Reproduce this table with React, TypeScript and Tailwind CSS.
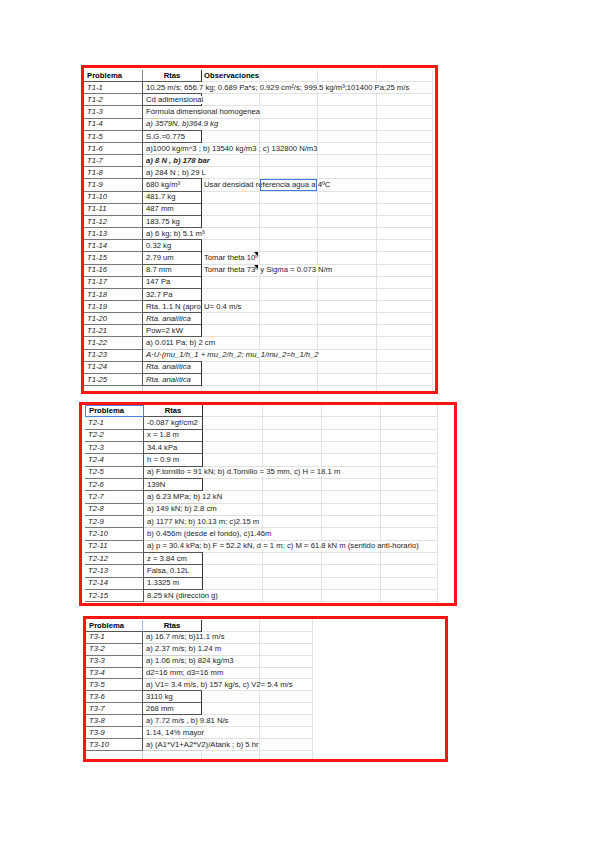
import React from 'react';

type Row = {
  p: string;
  r: string;
  o?: string;
  it?: boolean; // italic answer
  strong?: boolean;
  box?: boolean; // answer cell framed with dark border
  clip?: boolean; // answer cut at the column edge
  sel?: boolean; // blue selection on column D
  note?: boolean; // comment marker on column C
  empty?: boolean;
};

type SheetProps = {
  rows: Row[];
  widths: string[];
  rowH: string;
  head: 'plain' | 'full' | 'edge';
  obsTitle?: boolean;
  frame: string;
  inner: string;
};

const t1: Row[] = [
  { p: 'T1-1', r: '10.25 m/s; 656.7 kg; 0.689 Pa*s; 0.929 cm²/s; 999.5 kg/m³;101400 Pa;25 m/s' },
  { p: 'T1-2', r: 'Cd adimensional', box: true },
  { p: 'T1-3', r: 'Fórmula dimensional homogenea' },
  { p: 'T1-4', r: 'a) 3579N, b)364.9 kg', it: true },
  { p: 'T1-5', r: 'S.G.=0.775', box: true },
  { p: 'T1-6', r: 'a)1000 kg/m^3 ; b) 13540 kg/m3 ; c) 132800 N/m3' },
  { p: 'T1-7', r: 'a) 8 N , b) 178 bar', it: true, strong: true },
  { p: 'T1-8', r: 'a) 284 N ; b) 29 L' },
  { p: 'T1-9', r: '680 kg/m³', box: true, o: 'Usar densidad referencia agua a 4ºC', sel: true },
  { p: 'T1-10', r: '481.7 kg', box: true },
  { p: 'T1-11', r: '487 mm', box: true },
  { p: 'T1-12', r: '183.75 kg', box: true },
  { p: 'T1-13', r: 'a) 6 kg; b) 5.1 m³' },
  { p: 'T1-14', r: '0.32 kg', box: true },
  { p: 'T1-15', r: '2.79 um', box: true, o: 'Tomar theta 10º', note: true },
  { p: 'T1-16', r: '8.7 mm', box: true, o: 'Tomar theta 73º y Sigma = 0.073 N/m', note: true },
  { p: 'T1-17', r: '147 Pa', box: true },
  { p: 'T1-18', r: '32.7 Pa', box: true },
  { p: 'T1-19', r: 'Rta. 1.1 N (aprox', box: true, clip: true, o: 'U= 0.4 m/s' },
  { p: 'T1-20', r: 'Rta. analítica', it: true, box: true },
  { p: 'T1-21', r: 'Pow=2 kW', box: true },
  { p: 'T1-22', r: 'a) 0.011 Pa; b) 2 cm' },
  { p: 'T1-23', r: 'A·U·(mu_1/h_1 + mu_2/h_2; mu_1/mu_2=h_1/h_2', it: true },
  { p: 'T1-24', r: 'Rta. analítica', it: true, box: true },
  { p: 'T1-25', r: 'Rta. analítica', it: true, box: true },
  { p: '', r: '', empty: true },
];

const t2: Row[] = [
  { p: 'T2-1', r: '-0.087 kgf/cm2', box: true },
  { p: 'T2-2', r: 'x = 1.8 m', box: true },
  { p: 'T2-3', r: '34.4 kPa', box: true },
  { p: 'T2-4', r: 'h = 0.9 m', box: true },
  { p: 'T2-5', r: 'a) F.tornillo = 91 kN; b) d.Tornillo = 35 mm, c) H = 18.1 m' },
  { p: 'T2-6', r: '139N', box: true },
  { p: 'T2-7', r: 'a) 6.23 MPa; b) 12 kN' },
  { p: 'T2-8', r: 'a) 149 kN; b) 2.8 cm' },
  { p: 'T2-9', r: 'a) 1177 kN; b) 10.13 m; c)2.15 m' },
  { p: 'T2-10', r: 'b) 0.456m (desde el fondo), c)1.46m' },
  { p: 'T2-11', r: 'a) p = 30.4 kPa; b) F = 52.2 kN, d = 1 m; c) M = 61.8 kN m (sentido anti-horario)' },
  { p: 'T2-12', r: 'z = 3.84 cm', box: true },
  { p: 'T2-13', r: 'Falsa, 0.12L', box: true },
  { p: 'T2-14', r: '1.3325 m', box: true },
  { p: 'T2-15', r: '8.25 kN (dirección g)' },
  { p: '', r: '', empty: true },
];

const t3: Row[] = [
  { p: 'T3-1', r: 'a) 16.7 m/s; b)11.1 m/s' },
  { p: 'T3-2', r: 'a) 2.37 m/s; b) 1.24 m' },
  { p: 'T3-3', r: 'a) 1.06 m/s; b) 824 kg/m3' },
  { p: 'T3-4', r: 'd2=16 mm; d3=16 mm' },
  { p: 'T3-5', r: 'a) V1= 3.4 m/s, b) 157 kg/s, c) V2= 5.4 m/s' },
  { p: 'T3-6', r: '3110 kg', box: true },
  { p: 'T3-7', r: '268 mm', box: true },
  { p: 'T3-8', r: 'a) 7.72 m/s , b) 9.81 N/s' },
  { p: 'T3-9', r: '1.14, 14% mayor' },
  { p: 'T3-10', r: 'a) (A1*V1+A2*V2)/Atank ; b) 5 hr' },
  { p: '', r: '', empty: true },
];

const Sheet = ({ rows, widths, rowH, head, obsTitle, frame, inner }: SheetProps) => {
  const rest = widths.slice(2);

  return (
    <div className={`border-[3px] border-[#ff1414] overflow-hidden ${frame}`}>
      <div className={`flex flex-col ${inner}`}>
        {/* Header */}
        <div className={`flex ${rowH}`}>
          <div
            className={`${widths[0]} shrink-0 flex items-center pl-[3px] font-bold text-black ${
              head === 'full'
                ? 'border border-[#4a82dc]'
                : head === 'edge'
                  ? 'border-r border-b border-r-[#9dbdf0] border-b-[#555]'
                  : 'border-r border-b border-r-[#8a8a8a] border-b-[#555]'
            }`}
          >
            Problema
          </div>
          <div
            className={`${widths[1]} shrink-0 flex items-center justify-center font-bold text-black border-r border-b border-r-[#333] border-b-[#555]`}
          >
            Rtas
          </div>
          {rest.map((w, i) => (
            <div
              key={i}
              className={`${w} shrink-0 flex items-center pl-[2px] whitespace-nowrap border-r border-b border-[#e2e2e2]`}
            >
              {i === 0 && obsTitle && (
                <span className="relative z-10 bg-white font-bold text-black">Observaciones</span>
              )}
            </div>
          ))}
        </div>

        {/* Rows */}
        {rows.map((row, idx) => {
          const next = rows[idx + 1];
          const darkB = row.box || (next && next.box);
          return (
            <div key={idx} className={`flex ${rowH}`}>
              <div
                className={`${widths[0]} shrink-0 flex items-center pl-[3px] italic border-r border-b ${
                  row.empty ? 'border-r-[#cfcfcf] border-b-[#e2e2e2]' : 'border-r-[#555] border-b-[#777]'
                }`}
              >
                {row.p}
              </div>
              <div
                className={`${widths[1]} shrink-0 flex items-center pl-[3px] whitespace-nowrap border-b ${
                  row.box ? 'border-r border-r-[#333]' : ''
                } ${row.empty ? 'border-r border-r-[#e2e2e2] border-b-[#e2e2e2]' : darkB ? 'border-b-[#555]' : 'border-b-[#cfcfcf]'} ${
                  row.clip ? 'overflow-hidden' : ''
                } ${row.it ? 'italic' : ''} ${row.strong ? 'font-semibold' : ''}`}
              >
                <span className="relative z-10 bg-white">{row.r}</span>
              </div>
              {rest.map((w, i) => (
                <div
                  key={i}
                  className={`${w} shrink-0 relative flex items-center pl-[2px] whitespace-nowrap border-r border-b border-[#e2e2e2]`}
                >
                  {i === 0 && row.o && <span className="relative z-10 bg-white">{row.o}</span>}
                  {i === 0 && row.note && (
                    <span className="absolute top-0 right-[1px] z-20 w-0 h-0 border-l-[4px] border-l-transparent border-t-[4px] border-t-black" />
                  )}
                  {i === 1 && row.sel && <span className="absolute inset-0 z-20 border border-[#3b78e0]" />}
                </div>
              ))}
            </div>
          );
        })}
      </div>
    </div>
  );
};

export default function App() {
  return (
    <div className="min-h-[848px] w-[599px] bg-white pt-[65px] font-['Liberation_Sans',Arial,sans-serif] text-[7.7px] leading-none text-[#222]">
      <Sheet
        rows={t1}
        widths={['w-[59px]', 'w-[59px]', 'w-[58px]', 'w-[58px]', 'w-[59px]', 'w-[56px]']}
        rowH="h-[12.16px]"
        head="plain"
        obsTitle
        frame="ml-[81px] w-[357px] h-[329px]"
        inner="pt-[2px]"
      />
      <Sheet
        rows={t2}
        widths={['w-[59px]', 'w-[59px]', 'w-[60px]', 'w-[59px]', 'w-[59px]', 'w-[57px]']}
        rowH="h-[12.33px]"
        head="full"
        frame="mt-[8px] ml-[79px] w-[378px] h-[204px]"
        inner="pl-[3px]"
      />
      <Sheet
        rows={t3}
        widths={['w-[57px]', 'w-[59px]', 'w-[58px]', 'w-[53px]']}
        rowH="h-[11.9px]"
        head="edge"
        frame="mt-[10px] ml-[83px] w-[365px] h-[146px]"
        inner="pt-px"
      />
    </div>
  );
}
